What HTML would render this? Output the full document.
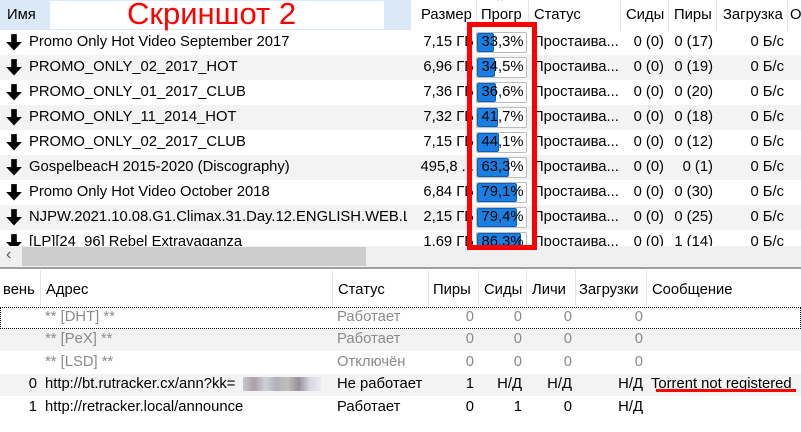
<!DOCTYPE html>
<html><head><meta charset="utf-8"><style>
body{margin:0;width:801px;height:432px;overflow:hidden;background:#fff;font-family:"Liberation Sans","DejaVu Sans",sans-serif;font-size:14.8px;color:#000;position:relative}
.a{position:absolute;white-space:nowrap}
.r{text-align:right}
.row{position:absolute;left:0;width:801px;height:25px}
.g{background:#f3f3f3}
.arr{position:absolute;left:5px;width:18px;height:18px}
.bar{position:absolute;left:476px;width:51px;height:21px;border:1px solid #bcbcbc;background:#fff;border-radius:2px;box-sizing:border-box}
.fill{position:absolute;left:0;top:0;bottom:0;background:#1a7fe0;border:1px solid #0a5fb8;border-radius:2px;box-sizing:border-box}
.pt{position:absolute;left:-3px;width:57px;text-align:center;top:1px}
.sep{position:absolute;width:1px;background:#e5e5e5}
.lr{position:absolute;left:0;width:801px;height:22px}
.gr{color:#8a8a8a}
</style></head><body>
<div class="a" style="left:0;top:0;width:410px;height:30px;background:#dae8f7"></div>
<div class="a" style="left:50px;top:1px;width:334px;height:28px;background:#fff"></div>
<div class="a" style="left:7px;top:7px">Имя</div>
<div class="a" style="left:127px;top:-4px;font-size:31px;color:#f00">Скриншот 2</div>
<div class="sep" style="left:410px;top:0;height:30px"></div>
<div class="a" style="left:421px;top:7px">Размер</div>
<div class="sep" style="left:476px;top:0;height:30px"></div>
<div class="a" style="left:481px;top:7px">Прогр</div>
<div class="a" style="left:498px;top:-4px;font-size:10px;color:#777">^</div>
<div class="sep" style="left:528px;top:0;height:30px"></div>
<div class="a" style="left:534px;top:7px">Статус</div>
<div class="sep" style="left:620px;top:0;height:30px"></div>
<div class="a" style="left:626px;top:7px">Сиды</div>
<div class="sep" style="left:668px;top:0;height:30px"></div>
<div class="a" style="left:674px;top:7px">Пиры</div>
<div class="sep" style="left:716px;top:0;height:30px"></div>
<div class="a" style="left:723px;top:7px">Загрузка</div>
<div class="sep" style="left:787px;top:0;height:30px"></div>
<div class="a" style="left:790px;top:7px">О</div>

<div id="rows"></div>
<script>
var d=[["Promo Only Hot Video September 2017","7,15 ГБ","33,3%",33.3,"0 (0)","0 (17)"],
["PROMO_ONLY_02_2017_HOT","6,96 ГБ","34,5%",34.5,"0 (0)","0 (19)"],
["PROMO_ONLY_01_2017_CLUB","7,36 ГБ","36,6%",36.6,"0 (0)","0 (20)"],
["PROMO_ONLY_11_2014_HOT","7,32 ГБ","41,7%",41.7,"0 (0)","0 (18)"],
["PROMO_ONLY_02_2017_CLUB","7,15 ГБ","44,1%",44.1,"0 (0)","0 (12)"],
["GospelbeacH 2015-2020 (Discography)","495,8 ...","63,3%",63.3,"0 (0)","0 (1)"],
["Promo Only Hot Video October 2018","6,84 ГБ","79,1%",79.1,"0 (0)","0 (30)"],
["NJPW.2021.10.08.G1.Climax.31.Day.12.ENGLISH.WEB.LA...","2,15 ГБ","79,4%",79.4,"0 (0)","0 (25)"],
["[LP][24_96] Rebel Extravaganza","1,69 ГБ","86,3%",86.3,"0 (0)","1 (14)"]];
var h="";
d.forEach(function(r,i){var t=30+25*i;
h+='<div class="row'+(i%2?' g':'')+'" style="top:'+t+'px"></div>';
h+='<svg class="arr" style="top:'+(t+3)+'px" viewBox="0 0 16 16"><path d="M5.5 1h5v7h4.5l-7 7.5-7-7.5h4.5z" fill="#000"/></svg>';
h+='<div class="a" style="left:29px;top:'+(t+4)+'px;width:378px;overflow:hidden">'+r[0]+'</div>';
h+='<div class="a r" style="left:412px;width:62px;top:'+(t+4)+'px;overflow:hidden">'+r[1]+'</div>';
h+='<div class="bar" style="top:'+(t+2)+'px"><div class="fill" style="width:'+(r[3]/100*51)+'px"></div><div class="pt">'+r[2]+'</div></div>';
h+='<div class="a" style="left:533px;top:'+(t+4)+'px">Простаива...</div>';
h+='<div class="a r" style="left:610px;width:54px;top:'+(t+4)+'px">'+r[4]+'</div>';
h+='<div class="a r" style="left:660px;width:53px;top:'+(t+4)+'px">'+r[5]+'</div>';
h+='<div class="a r" style="left:720px;width:64px;top:'+(t+4)+'px">0 Б/с</div>';
});
document.getElementById('rows').innerHTML=h;
</script>
<div class="a" style="left:0;top:246px;width:801px;height:21px;background:#f0f0f0"></div>
<div class="a" style="left:22px;top:247px;width:344px;height:19px;background:#cdcdcd"></div>
<div class="a" style="left:6px;top:246px;font-size:16px;color:#555">&lsaquo;</div>
<div class="a" style="left:0;top:267px;width:801px;height:2px;background:#a0a0a0"></div>
<div class="a" style="left:467px;top:22px;width:60px;height:218px;border:5px solid #f00"></div>

<div class="a" style="left:3px;top:282px">вень</div>
<div class="sep" style="left:40px;top:270px;height:36px"></div>
<div class="a" style="left:46px;top:282px">Адрес</div>
<div class="sep" style="left:332px;top:270px;height:36px"></div>
<div class="a" style="left:338px;top:282px">Статус</div>
<div class="sep" style="left:428px;top:270px;height:36px"></div>
<div class="a" style="left:433px;top:282px">Пиры</div>
<div class="sep" style="left:478px;top:270px;height:36px"></div>
<div class="a" style="left:484px;top:282px">Сиды</div>
<div class="sep" style="left:526px;top:270px;height:36px"></div>
<div class="a" style="left:532px;top:282px">Личи</div>
<div class="sep" style="left:575px;top:270px;height:36px"></div>
<div class="a" style="left:579px;top:282px">Загрузки</div>
<div class="sep" style="left:646px;top:270px;height:36px"></div>
<div class="a" style="left:652px;top:282px">Сообщение</div>

<div class="lr" style="top:307px;border:1px dotted #000;box-sizing:border-box"></div>
<div class="lr g" style="top:329px"></div>
<div class="lr g" style="top:374px"></div>
<div id="low"></div>
<script>
var L=[["","** [DHT] **","Работает","0","0","0","0","",1],
["","** [PeX] **","Работает","0","0","0","0","",1],
["","** [LSD] **","Отключён","0","0","0","0","",1],
["0","http://bt.rutracker.cx/ann?kk=","Не работает","1","Н/Д","Н/Д","Н/Д","Torrent not registered",0],
["1","http://retracker.local/announce","Работает","0","1","0","Н/Д","",0]];
var s="";
L.forEach(function(r,i){var t=309+22.4*i;var c=r[8]?' gr':'';
s+='<div class="a r'+c+'" style="left:0;width:37px;top:'+t+'px">'+r[0]+'</div>';
s+='<div class="a'+c+'" style="left:45px;top:'+t+'px">'+r[1]+'</div>';
s+='<div class="a'+c+'" style="left:337px;top:'+t+'px;width:90px;overflow:hidden">'+r[2]+'</div>';
s+='<div class="a r'+c+'" style="left:430px;width:44px;top:'+t+'px">'+r[3]+'</div>';
s+='<div class="a r'+c+'" style="left:478px;width:44px;top:'+t+'px">'+r[4]+'</div>';
s+='<div class="a r'+c+'" style="left:526px;width:46px;top:'+t+'px">'+r[5]+'</div>';
s+='<div class="a r'+c+'" style="left:575px;width:68px;top:'+t+'px">'+r[6]+'</div>';
s+='<div class="a" style="left:651px;top:'+t+'px">'+r[7]+'</div>';
});
document.getElementById('low').innerHTML=s;
</script>
<div class="a" style="left:243px;top:377px;width:78px;height:14px;background:linear-gradient(90deg,#c8c8d0,#a8a0a8,#d0d0d8,#b0b0b8,#c0c0c0,#989098,#d8d8e0,#e8e8ee)"></div>
<div class="a" style="left:656px;top:389px;width:140px;height:3px;background:#f00"></div>
</body></html>
